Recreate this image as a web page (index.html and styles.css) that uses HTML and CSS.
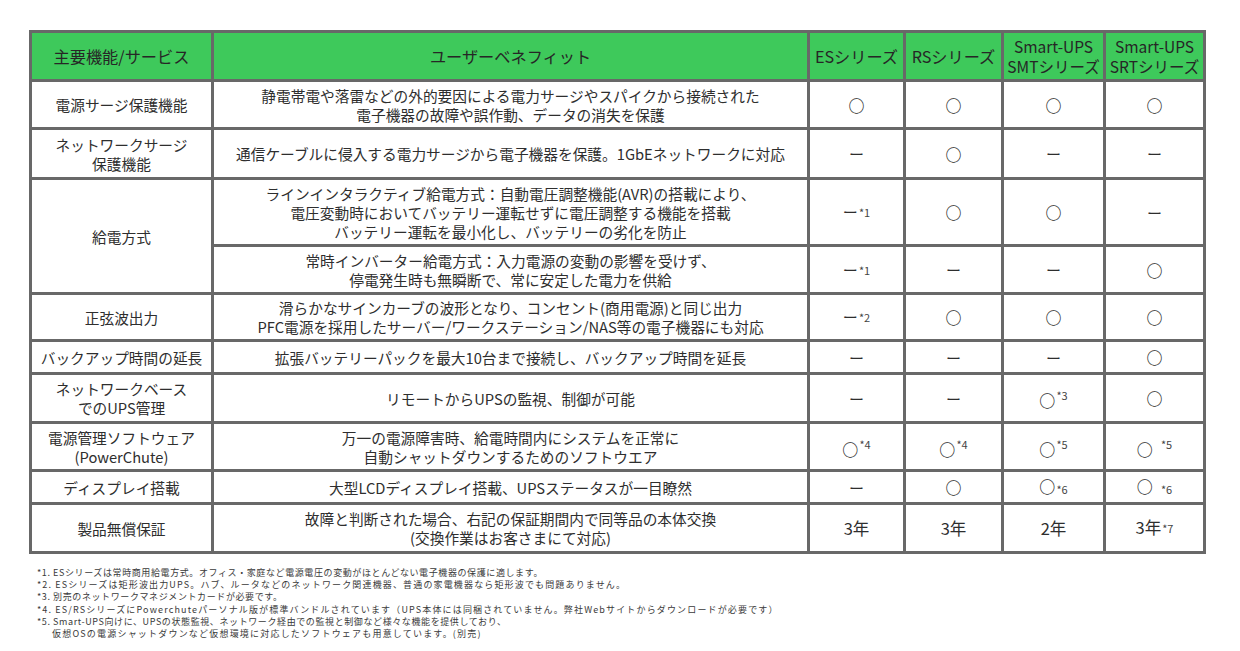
FILE: index.html
```html
<!DOCTYPE html>
<html lang="ja">
<head>
<meta charset="utf-8">
<link rel="stylesheet" href="styles.css">
</head>
<body>
<div class="page">
<table class="cmp">
  <colgroup>
    <col class="c-feat"><col class="c-ben"><col class="c-es"><col class="c-rs"><col class="c-smt"><col class="c-srt">
  </colgroup>
  <thead>
    <tr class="h-head">
      <th>主要機能/サービス</th>
      <th>ユーザーベネフィット</th>
      <th>ESシリーズ</th>
      <th>RSシリーズ</th>
      <th class="two">Smart-UPS<br>SMTシリーズ</th>
      <th class="two">Smart-UPS<br>SRTシリーズ</th>
    </tr>
  </thead>
  <tbody>
    <tr class="h48">
      <td>電源サージ保護機能</td>
      <td>静電帯電や落雷などの外的要因による電力サージやスパイクから接続された<br>電子機器の故障や誤作動、データの消失を保護</td>
      <td class="m"><span class="o">○</span></td><td class="m"><span class="o">○</span></td><td class="m"><span class="o">○</span></td><td class="m"><span class="o">○</span></td>
    </tr>
    <tr class="h50">
      <td>ネットワークサージ<br>保護機能</td>
      <td>通信ケーブルに侵入する電力サージから電子機器を保護。1GbEネットワークに対応</td>
      <td class="m">ー</td><td class="m"><span class="o">○</span></td><td class="m">ー</td><td class="m">ー</td>
    </tr>
    <tr class="h67">
      <td rowspan="2">給電方式</td>
      <td>ラインインタラクティブ給電方式：自動電圧調整機能(AVR)の搭載により、<br>電圧変動時においてバッテリー運転せずに電圧調整する機能を搭載<br>バッテリー運転を最小化し、バッテリーの劣化を防止</td>
      <td class="m">ー<span class="n mid">*1</span></td><td class="m"><span class="o">○</span></td><td class="m"><span class="o">○</span></td><td class="m">ー</td>
    </tr>
    <tr class="h48">
      <td>常時インバーター給電方式：入力電源の変動の影響を受けず、<br>停電発生時も無瞬断で、常に安定した電力を供給</td>
      <td class="m">ー<span class="n mid">*1</span></td><td class="m">ー</td><td class="m">ー</td><td class="m"><span class="o">○</span></td>
    </tr>
    <tr class="h47">
      <td>正弦波出力</td>
      <td>滑らかなサインカーブの波形となり、コンセント(商用電源)と同じ出力<br>PFC電源を採用したサーバー/ワークステーション/NAS等の電子機器にも対応</td>
      <td class="m">ー<span class="n mid">*2</span></td><td class="m"><span class="o">○</span></td><td class="m"><span class="o">○</span></td><td class="m"><span class="o">○</span></td>
    </tr>
    <tr class="h33">
      <td>バックアップ時間の延長</td>
      <td>拡張バッテリーパックを最大10台まで接続し、バックアップ時間を延長</td>
      <td class="m">ー</td><td class="m">ー</td><td class="m">ー</td><td class="m"><span class="o">○</span></td>
    </tr>
    <tr class="h49">
      <td>ネットワークベース<br>でのUPS管理</td>
      <td>リモートからUPSの監視、制御が可能</td>
      <td class="m">ー</td><td class="m">ー</td><td class="m"><span class="o">○</span><span class="n up">*3</span></td><td class="m"><span class="o">○</span></td>
    </tr>
    <tr class="h48">
      <td>電源管理ソフトウェア<br>(PowerChute)</td>
      <td>万一の電源障害時、給電時間内にシステムを正常に<br>自動シャットダウンするためのソフトウエア</td>
      <td class="m"><span class="o">○</span><span class="n up">*4</span></td><td class="m"><span class="o">○</span><span class="n up">*4</span></td><td class="m"><span class="o">○</span><span class="n up">*5</span></td><td class="m"><span class="o">○</span><span class="n up gap">*5</span></td>
    </tr>
    <tr class="h33">
      <td>ディスプレイ搭載</td>
      <td>大型LCDディスプレイ搭載、UPSステータスが一目瞭然</td>
      <td class="m">ー</td><td class="m"><span class="o">○</span></td><td class="m"><span class="o">○</span><span class="n dn">*6</span></td><td class="m"><span class="o">○</span><span class="n dn gap">*6</span></td>
    </tr>
    <tr class="h49">
      <td>製品無償保証</td>
      <td>故障と判断された場合、右記の保証期間内で同等品の本体交換<br>(交換作業はお客さまにて対応)</td>
      <td class="m yr">3年</td><td class="m yr">3年</td><td class="m yr">2年</td><td class="m yr">3年<span class="n mid">*7</span></td>
    </tr>
  </tbody>
</table>
<ul class="notes">
  <li>*1. ESシリーズは常時商用給電方式。オフィス・家庭など電源電圧の変動がほとんどない電子機器の保護に適します。</li>
  <li class="wide">*2. ESシリーズは矩形波出力UPS。ハブ、ルータなどのネットワーク関連機器、普通の家電機器なら矩形波でも問題ありません。</li>
  <li>*3. 別売のネットワークマネジメントカードが必要です。</li>
  <li class="wide">*4. ES/RSシリーズにPowerchuteパーソナル版が標準バンドルされています（UPS本体には同梱されていません。弊社Webサイトからダウンロードが必要です）</li>
  <li>*5. Smart-UPS向けに、UPSの状態監視、ネットワーク経由での監視と制御など様々な機能を提供しており、<br><span class="ind">仮想OSの電源シャットダウンなど仮想環境に対応したソフトウェアも用意しています。(別売)</span></li>
</ul>
</div>
</body>
</html>
```

FILE: styles.css
```css
html, body {
  margin: 0;
  padding: 0;
  background: #ffffff;
}

.page {
  padding: 30px 0 0 29px;
  font-family: "Noto Sans CJK JP", "Noto Sans", sans-serif;
  color: #2e2e2e;
}

.cmp {
  border-collapse: collapse;
  table-layout: fixed;
  width: 1177px;
  border: 3px solid #686868;
}

.cmp th,
.cmp td {
  border: 3px solid #686868;
  padding: 0;
  text-align: center;
  vertical-align: middle;
  font-size: 14.7px;
  line-height: 19px;
  font-weight: 400;
}

.c-feat { width: 182px; }
.c-ben { width: 596px; }
.c-es { width: 96px; }
.c-rs { width: 98px; }
.c-smt { width: 102px; }
.c-srt { width: 100px; }

.cmp th {
  background: #3ec95b;
  color: #262626;
  font-size: 16.2px;
  line-height: 20px;
}

.cmp th.two {
  font-size: 15.5px;
}

.h-head { height: 49px; }
.h33 { height: 33px; }
.h47 { height: 47px; }
.h48 { height: 48px; }
.h49 { height: 49px; }
.h50 { height: 50px; }
.h67 { height: 67px; }

.cmp td.m {
  font-size: 15px;
  white-space: nowrap;
}

.cmp td.yr {
  font-size: 16.5px;
}

.o {
  display: inline-block;
  font-size: 16px;
  line-height: 19px;
  font-weight: 700;
  vertical-align: -1px;
}

.n {
  font-size: 11px;
  color: #444444;
  margin-left: 1px;
  display: inline-block;
}

.n.mid { vertical-align: 1px; }
.n.up { vertical-align: 6px; }
.n.dn { vertical-align: -2px; }
.n.gap { margin-left: 8px; }

.notes {
  list-style: none;
  margin: 13px 0 0 8px;
  padding: 0;
  font-size: 9px;
  line-height: 12.2px;
  letter-spacing: 0.6px;
  color: #3a3a3a;
}

.notes .wide {
  letter-spacing: 1.15px;
}

.ind {
  padding-left: 15px;
  letter-spacing: 1.2px;
}
```
